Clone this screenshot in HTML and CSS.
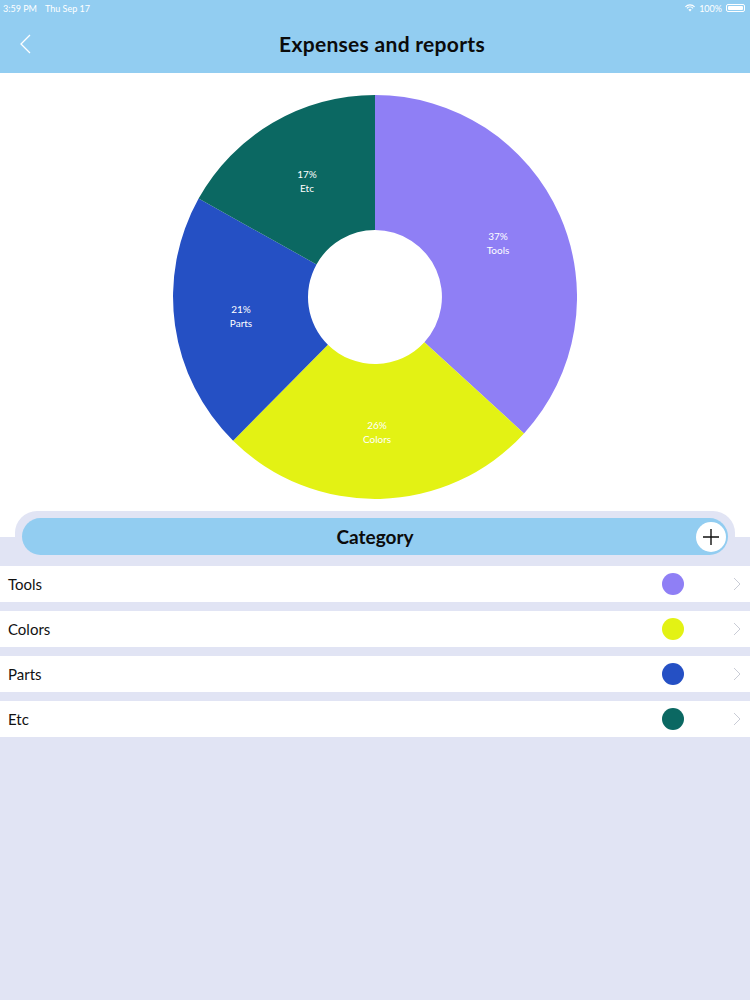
FILE: index.html
```html
<!DOCTYPE html>
<html>
<head>
<meta charset="utf-8">
<link rel="stylesheet" href="styles.css">
</head>
<body>
<header class="top">
  <div class="status">
    <div class="status-left"><span>3:59 PM</span><span>Thu Sep 17</span></div>
    <div class="status-right">
      <svg class="wifi" width="10" height="8" viewBox="0 0 10 8"><path d="M5 7.6 L3.4 5.8 A2.4 2.4 0 0 1 6.6 5.8 Z" fill="#fff"/><path d="M1.9 4.3 A4.4 4.4 0 0 1 8.1 4.3" stroke="#fff" stroke-width="1.1" fill="none"/><path d="M0.4 2.8 A6.5 6.5 0 0 1 9.6 2.8" stroke="#fff" stroke-width="1.1" fill="none"/></svg>
      <span>100%</span>
      <span class="battery"><span class="battery-fill"></span></span>
    </div>
  </div>
  <nav class="nav">
    <svg class="back" width="14" height="20" viewBox="0 0 14 20"><path d="M11 1 L2 10 L11 19" stroke="#fff" stroke-width="1.3" fill="none"/></svg>
    <h1 class="title">Expenses and reports</h1>
    <span class="nav-spacer"></span>
  </nav>
</header>

<section class="chart">
  <svg class="donut" width="404" height="404" viewBox="0 0 404 404">
    <path d="M202,0 A202,202 0 0 1 351,338.4 L251.4,247.2 A67,67 0 0 0 202,135 Z" fill="#8f7ff5"/>
    <path d="M351,338.4 A202,202 0 0 1 60.1,345.7 L154.9,249.7 A67,67 0 0 0 251.4,247.2 Z" fill="#e3f214"/>
    <path d="M60.1,345.7 A202,202 0 0 1 25.6,103.6 L143.5,169.4 A67,67 0 0 0 154.9,249.7 Z" fill="#2550c4"/>
    <path d="M25.6,103.6 A202,202 0 0 1 202,0 L202,135 A67,67 0 0 0 143.5,169.4 Z" fill="#0b6862"/>
    <g class="lbl">
      <text x="325" y="145">37%</text><text x="325" y="159">Tools</text>
      <text x="204" y="334">26%</text><text x="204" y="348">Colors</text>
      <text x="68" y="218">21%</text><text x="68" y="232">Parts</text>
      <text x="134" y="83">17%</text><text x="134" y="97">Etc</text>
    </g>
  </svg>
</section>

<section class="category-band">
  <div class="pill-outer">
    <div class="pill">
      <span></span>
      <span class="pill-title">Category</span>
      <span class="pill-end">
        <span class="add">
          <svg width="18" height="18" viewBox="0 0 18 18"><path d="M9 1 V17 M1 9 H17" stroke="#111" stroke-width="1.4"/></svg>
        </span>
      </span>
    </div>
  </div>
</section>

<ul class="list">
  <li class="row"><span class="name">Tools</span><span class="dot dot-tools"></span><svg class="chev" width="8" height="14" viewBox="0 0 8 14"><path d="M1 1 L7 7 L1 13" stroke="#c9ccd6" stroke-width="1" fill="none"/></svg></li>
  <li class="row"><span class="name">Colors</span><span class="dot dot-colors"></span><svg class="chev" width="8" height="14" viewBox="0 0 8 14"><path d="M1 1 L7 7 L1 13" stroke="#c9ccd6" stroke-width="1" fill="none"/></svg></li>
  <li class="row"><span class="name">Parts</span><span class="dot dot-parts"></span><svg class="chev" width="8" height="14" viewBox="0 0 8 14"><path d="M1 1 L7 7 L1 13" stroke="#c9ccd6" stroke-width="1" fill="none"/></svg></li>
  <li class="row"><span class="name">Etc</span><span class="dot dot-etc"></span><svg class="chev" width="8" height="14" viewBox="0 0 8 14"><path d="M1 1 L7 7 L1 13" stroke="#c9ccd6" stroke-width="1" fill="none"/></svg></li>
</ul>
</body>
</html>
```
FILE: styles.css
```css
* { box-sizing: border-box; }
html, body { margin: 0; padding: 0; }
body {
  background: #e1e4f4;
  font-family: "Lato", "Open Sans", sans-serif;
  color: #111;
  min-height: 1000px;
}
.top {
  background: #92cdf1;
  height: 73px;
}
.status {
  height: 16px;
  display: flex;
  justify-content: space-between;
  align-items: center;
  padding: 0 5px 0 3px;
  color: #fff;
  font-size: 9px;
}
.status-left { display: flex; gap: 8px; }
.status-right { display: flex; align-items: center; gap: 4px; }
.battery {
  width: 19px;
  height: 8px;
  border: 1px solid #fff;
  border-radius: 2px;
  padding: 1px;
  display: flex;
}
.battery-fill { flex: 1; background: #fff; border-radius: 1px; }
.nav {
  height: 55px;
  display: grid;
  grid-template-columns: 60px 1fr 60px;
  align-items: center;
}
.back { margin-left: 19px; margin-top: 1px; }
.title {
  margin: 0;
  padding-left: 14px;
  text-align: center;
  font-size: 21px;
  font-weight: 700;
  letter-spacing: 0.3px;
  color: #0b0b0b;
}
.chart {
  background: #fff;
  padding-top: 22px;
}
.donut { display: block; margin: 0 auto; }
.lbl text {
  fill: #fff;
  font-size: 10px;
  text-anchor: middle;
  font-family: "Lato", sans-serif;
}
.category-band {
  background: linear-gradient(#fff 38px, #e1e4f4 38px);
  padding: 12px 15px 11px;
}
.pill-outer {
  background: #e1e4f4;
  border-radius: 22px 22px 0 0;
  padding: 7px 7px 0;
}
.pill {
  height: 37px;
  background: #92cdf1;
  border-radius: 19px;
  display: grid;
  grid-template-columns: 1fr auto 1fr;
  align-items: center;
}
.pill-title {
  font-size: 19px;
  font-weight: 700;
  color: #0b0b0b;
}
.pill-end { display: flex; justify-content: flex-end; padding-right: 2px; }
.add {
  width: 30px;
  height: 30px;
  border-radius: 50%;
  background: #fff;
  display: flex;
  align-items: center;
  justify-content: center;
}
.list {
  list-style: none;
  margin: 0;
  padding: 0;
}
.row {
  height: 36px;
  background: #fff;
  margin-bottom: 9px;
  display: flex;
  align-items: center;
  padding: 0 9px 0 8px;
}
.name { flex: 1; font-size: 15px; }
.dot {
  width: 22px;
  height: 22px;
  border-radius: 50%;
  margin-right: 49px;
}
.dot-tools { background: #8f7ff5; }
.dot-colors { background: #e3f214; }
.dot-parts { background: #2550c4; }
.dot-etc { background: #0b6862; }
```
